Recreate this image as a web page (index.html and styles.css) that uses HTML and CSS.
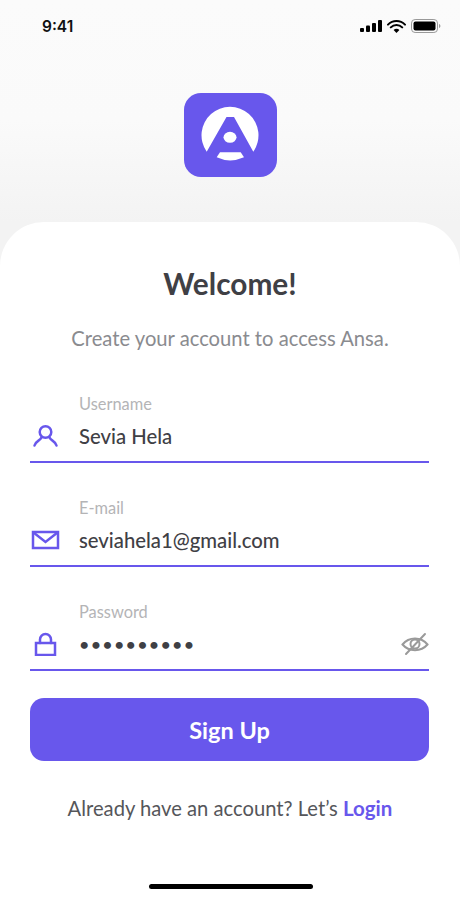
FILE: index.html
```html
<!DOCTYPE html>
<html lang="en">
<head>
  <meta charset="UTF-8" />
  <meta name="viewport" content="width=device-width, initial-scale=1.0" />
  <title>Ansa - Sign Up</title>
  <link rel="stylesheet" href="styles.css">
</head>
<body>

  <header class="top">
    <div class="status-bar">
      <span class="time">9:41</span>
      <div class="status-icons">
        <svg width="22" height="12" viewBox="0 0 22 12"><rect x="0" y="8" width="4" height="4" rx="1"/><rect x="6" y="5.5" width="4" height="6.5" rx="1"/><rect x="12" y="3" width="4" height="9" rx="1"/><rect x="18" y="0" width="4" height="12" rx="1"/></svg>
        <svg width="19" height="13" viewBox="0 0 19 13"><path d="M1 4.6a12 12 0 0 1 17 0M3.8 7.4a8 8 0 0 1 11.4 0" fill="none" stroke="#000" stroke-width="2" stroke-linecap="round"/><path d="M9.5 13 6.6 10a4 4 0 0 1 5.8 0z"/></svg>
        <svg width="30" height="14" viewBox="0 0 30 14"><rect x="0.5" y="0.5" width="26" height="13" rx="3.6" fill="none" stroke="#999"/><rect x="2.5" y="2.5" width="22" height="9" rx="2"/><path d="M28 5v4c.8-.3 1.4-1.100 1.400-2s-.6-1.700-1.400-2z" fill="#999"/></svg>
      </div>
    </div>
    <div class="logo">
      <svg width="93" height="84" viewBox="0 0 93 84" fill="#fff">
        <path d="M22.700 58.700A28.500 28.500 0 1 1 69.300 58.700L50 24H42.500Z"/>
        <ellipse cx="46" cy="44.300" rx="6.500" ry="5.500"/>
        <path d="M36 59.300H56.700L60 64.300Q46 70.500 32.700 64.300Z"/>
      </svg>
    </div>
  </header>

  <main class="card">
    <h1>Welcome!</h1>
    <p class="intro">Create your account to access Ansa.</p>

    <form class="signup">
      <div class="field">
        <span class="field-label">Username</span>
        <div class="field-row">
          <svg class="field-icon" width="30" height="24" viewBox="0 0 30 24"><circle cx="15.500" cy="8" r="5.800"/><path d="M11.500 13.500C10 17 6 16.500 4.500 21.500M19.500 13.500C21 17 25 16.500 26.500 21.500"/></svg>
          <span class="field-value">Sevia Hela</span>
        </div>
      </div>
      <div class="field">
        <span class="field-label">E-mail</span>
        <div class="field-row">
          <svg class="field-icon" width="30" height="24" viewBox="0 0 30 24"><rect x="3" y="4" width="25" height="16"/><path d="M3.500 4.500 15.500 14 27.500 4.500"/></svg>
          <span class="field-value">seviahela1@gmail.com</span>
        </div>
      </div>
      <div class="field">
        <span class="field-label">Password</span>
        <div class="field-row">
          <svg class="field-icon" width="30" height="24" viewBox="0 0 30 24"><rect x="6" y="11" width="19" height="12"/><path d="M10 11V7.500a5.500 5.500 0 0 1 11 0V11"/></svg>
          <span class="field-value dots">••••••••••</span>
          <svg class="eye-icon" width="28" height="24" viewBox="0 0 28 24"><path d="M1.500 12.500C8 4.500 20 4.500 26.500 12.500 20 20 8 20 1.500 12.500Z"/><circle cx="14" cy="12" r="4.500"/><path d="M24 2 5 22"/></svg>
        </div>
      </div>
      <button type="button" class="btn-signup">Sign Up</button>
    </form>

    <p class="login-line">Already have an account? Let’s <a href="#">Login</a></p>
    <div class="home-bar"></div>
  </main>

</body>
</html>
```

FILE: styles.css
```css
:root {
  --color-primario: #6857ec;
  --color-texto: #3f4045;
  --color-gris: #b4b4b6;
}

* {
  box-sizing: border-box;
}

body {
  margin: 0;
  width: 460px;
  height: 900px;
  overflow: hidden;
  font-family: 'Lato', sans-serif;
  color: var(--color-texto);
  background: linear-gradient(#fbfbfb 0, #fafafa 120px, #f3f3f3 222px);
}

.top {
  height: 222px;
}

.status-bar {
  display: flex;
  justify-content: space-between;
  align-items: center;
  height: 53px;
  padding: 0 19px 1px 42px;
}

.time {
  font-family: 'Inter', sans-serif;
  font-size: 15.500px;
  font-weight: 600;
  color: #111;
}

.status-icons {
  display: flex;
  align-items: center;
  gap: 5px;
}

.logo {
  width: 93px;
  height: 84px;
  margin: 40px auto 0;
  background: var(--color-primario);
  border-radius: 17px;
}

.logo svg {
  display: block;
}

.card {
  height: 678px;
  padding-top: 44px;
  background: #fff;
  border-radius: 44px 44px 0 0;
  text-align: center;
}

h1 {
  margin: 0;
  height: 35px;
  font-size: 29.800px;
  line-height: 35px;
  font-weight: 700;
}

.intro {
  margin: 23px 0 0;
  font-size: 20.200px;
  line-height: 28px;
  color: #8a8b8f;
}

.signup {
  display: flex;
  flex-direction: column;
  gap: 35px;
  margin: 42px 31px 0 30px;
}

.field {
  text-align: left;
}

.field-label {
  display: block;
  height: 20px;
  padding-left: 49px;
  font-size: 16.400px;
  line-height: 20px;
  color: var(--color-gris);
}

.field-row {
  display: flex;
  align-items: center;
  height: 49px;
  padding-bottom: 4px;
  border-bottom: 2px solid var(--color-primario);
}

.field-icon {
  flex: none;
  fill: none;
  stroke: var(--color-primario);
  stroke-width: 2.500;
  stroke-linecap: round;
}

.field-value {
  flex: 1;
  margin-left: 19px;
  font-size: 20.300px;
  line-height: 26px;
  font-weight: 500;
}

.dots {
  font-size: 18px;
  letter-spacing: 1.200px;
}

.eye-icon {
  flex: none;
  fill: none;
  stroke: #9a9a9a;
  stroke-width: 2;
  stroke-linecap: round;
}

.btn-signup {
  display: block;
  width: 100%;
  height: 63px;
  margin-top: -8px;
  border: none;
  border-radius: 14px;
  background: var(--color-primario);
  color: #fff;
  font-family: inherit;
  font-size: 23.500px;
  font-weight: 700;
}

.login-line {
  margin: 33px 0 0;
  font-size: 20.200px;
  line-height: 28px;
  color: #55565a;
}

.login-line a {
  color: var(--color-primario);
  font-weight: 700;
  font-size: 20.500px;
  text-decoration: none;
}

.home-bar {
  width: 164px;
  height: 5px;
  margin: 62px 0 0 149px;
  border-radius: 3px;
  background: #000;
}
```
